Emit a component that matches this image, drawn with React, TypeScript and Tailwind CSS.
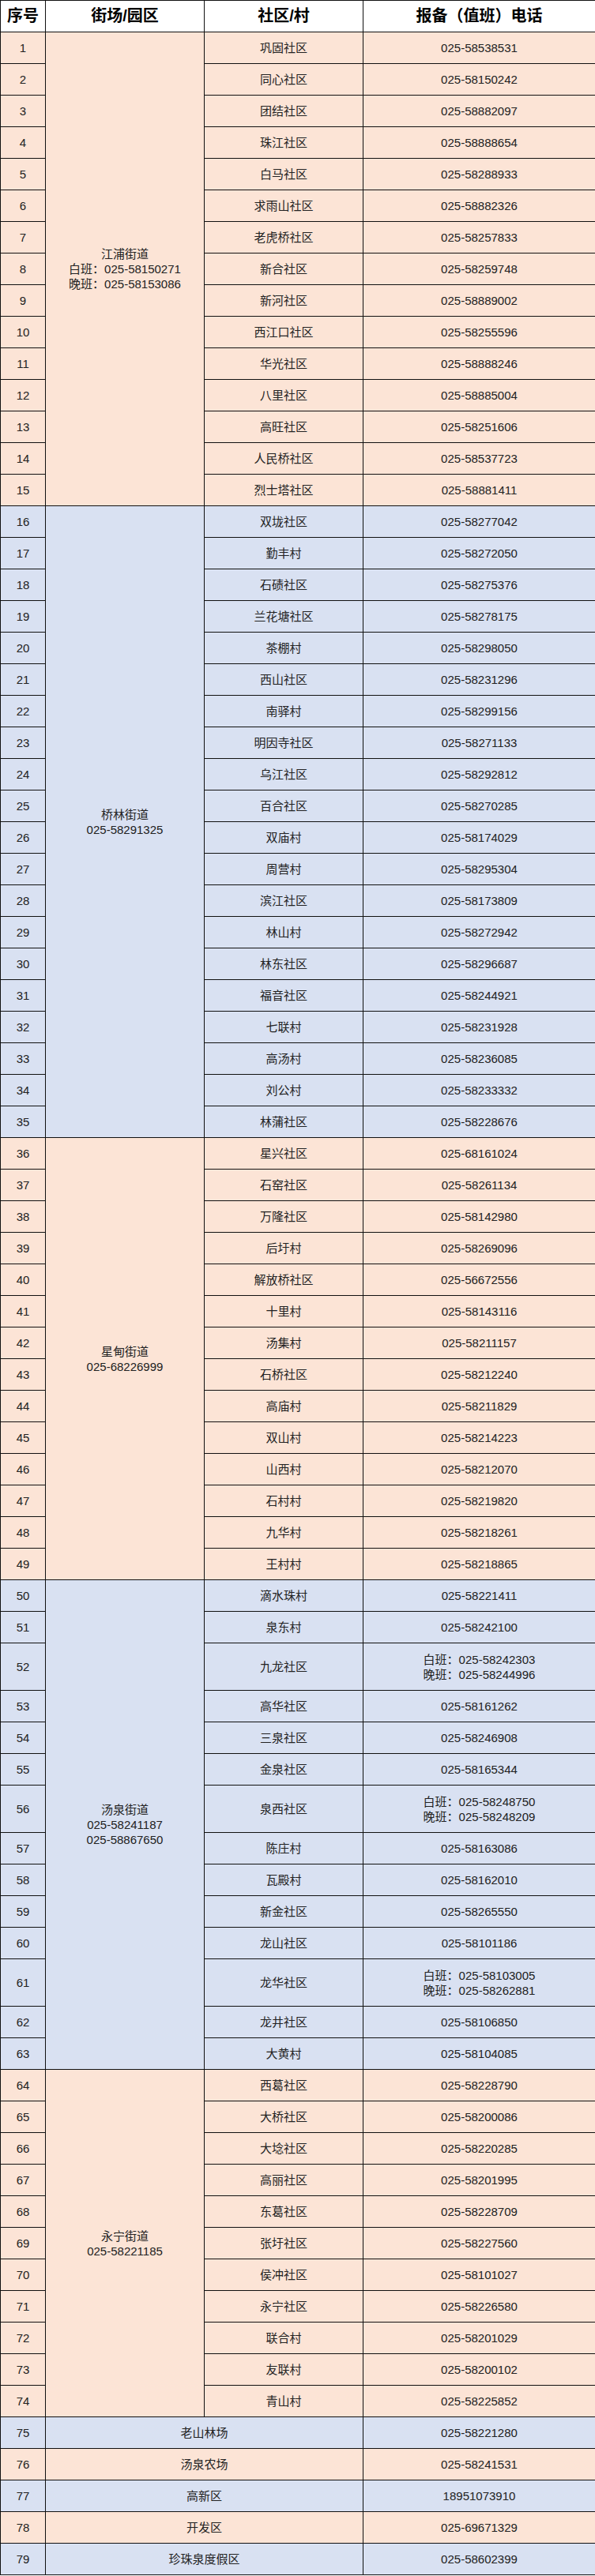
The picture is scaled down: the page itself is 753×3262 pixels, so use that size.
import React from 'react';

interface Row {
  name: string;
  phones: string[];
}

interface Group {
  title: string[];
  bg: string;
  rows: Row[];
}

const r = (name: string, ...phones: string[]): Row => ({ name, phones });

const PEACH = 'bg-[#fce4d6]';
const BLUE = 'bg-[#d9e1f2]';

const groups: Group[] = [
  {
    title: ['江浦街道', '白班：025-58150271', '晚班：025-58153086'],
    bg: PEACH,
    rows: [
      r('巩固社区', '025-58538531'),
      r('同心社区', '025-58150242'),
      r('团结社区', '025-58882097'),
      r('珠江社区', '025-58888654'),
      r('白马社区', '025-58288933'),
      r('求雨山社区', '025-58882326'),
      r('老虎桥社区', '025-58257833'),
      r('新合社区', '025-58259748'),
      r('新河社区', '025-58889002'),
      r('西江口社区', '025-58255596'),
      r('华光社区', '025-58888246'),
      r('八里社区', '025-58885004'),
      r('高旺社区', '025-58251606'),
      r('人民桥社区', '025-58537723'),
      r('烈士塔社区', '025-58881411'),
    ],
  },
  {
    title: ['桥林街道', '025-58291325'],
    bg: BLUE,
    rows: [
      r('双垅社区', '025-58277042'),
      r('勤丰村', '025-58272050'),
      r('石碛社区', '025-58275376'),
      r('兰花塘社区', '025-58278175'),
      r('茶棚村', '025-58298050'),
      r('西山社区', '025-58231296'),
      r('南驿村', '025-58299156'),
      r('明因寺社区', '025-58271133'),
      r('乌江社区', '025-58292812'),
      r('百合社区', '025-58270285'),
      r('双庙村', '025-58174029'),
      r('周营村', '025-58295304'),
      r('滨江社区', '025-58173809'),
      r('林山村', '025-58272942'),
      r('林东社区', '025-58296687'),
      r('福音社区', '025-58244921'),
      r('七联村', '025-58231928'),
      r('高汤村', '025-58236085'),
      r('刘公村', '025-58233332'),
      r('林蒲社区', '025-58228676'),
    ],
  },
  {
    title: ['星甸街道', '025-68226999'],
    bg: PEACH,
    rows: [
      r('星兴社区', '025-68161024'),
      r('石窑社区', '025-58261134'),
      r('万隆社区', '025-58142980'),
      r('后圩村', '025-58269096'),
      r('解放桥社区', '025-56672556'),
      r('十里村', '025-58143116'),
      r('汤集村', '025-58211157'),
      r('石桥社区', '025-58212240'),
      r('高庙村', '025-58211829'),
      r('双山村', '025-58214223'),
      r('山西村', '025-58212070'),
      r('石村村', '025-58219820'),
      r('九华村', '025-58218261'),
      r('王村村', '025-58218865'),
    ],
  },
  {
    title: ['汤泉街道', '025-58241187', '025-58867650'],
    bg: BLUE,
    rows: [
      r('滴水珠村', '025-58221411'),
      r('泉东村', '025-58242100'),
      r('九龙社区', '白班：025-58242303', '晚班：025-58244996'),
      r('高华社区', '025-58161262'),
      r('三泉社区', '025-58246908'),
      r('金泉社区', '025-58165344'),
      r('泉西社区', '白班：025-58248750', '晚班：025-58248209'),
      r('陈庄村', '025-58163086'),
      r('瓦殿村', '025-58162010'),
      r('新金社区', '025-58265550'),
      r('龙山社区', '025-58101186'),
      r('龙华社区', '白班：025-58103005', '晚班：025-58262881'),
      r('龙井社区', '025-58106850'),
      r('大黄村', '025-58104085'),
    ],
  },
  {
    title: ['永宁街道', '025-58221185'],
    bg: PEACH,
    rows: [
      r('西葛社区', '025-58228790'),
      r('大桥社区', '025-58200086'),
      r('大埝社区', '025-58220285'),
      r('高丽社区', '025-58201995'),
      r('东葛社区', '025-58228709'),
      r('张圩社区', '025-58227560'),
      r('侯冲社区', '025-58101027'),
      r('永宁社区', '025-58226580'),
      r('联合村', '025-58201029'),
      r('友联村', '025-58200102'),
      r('青山村', '025-58225852'),
    ],
  },
];

const others: { name: string; phone: string; bg: string }[] = [
  { name: '老山林场', phone: '025-58221280', bg: BLUE },
  { name: '汤泉农场', phone: '025-58241531', bg: PEACH },
  { name: '高新区', phone: '18951073910', bg: BLUE },
  { name: '开发区', phone: '025-69671329', bg: PEACH },
  { name: '珍珠泉度假区', phone: '025-58602399', bg: BLUE },
];

const cell = 'border border-[#111] text-center align-middle p-0';

export default function App() {
  let seq = 0;

  return (
    <div className="w-[753px] bg-white font-['Liberation_Sans','Noto_Sans_CJK_SC',sans-serif] text-[15px] leading-[19px] text-[#222]">
      <table className="w-[753px] table-fixed border-collapse">
        <colgroup>
          <col className="w-[57px]" />
          <col className="w-[201px]" />
          <col className="w-[201px]" />
          <col className="w-[294px]" />
        </colgroup>
        <thead>
          <tr className="h-10 bg-white text-[20px] font-bold text-black">
            <th className={cell}>序号</th>
            <th className={cell}>街场/园区</th>
            <th className={cell}>社区/村</th>
            <th className={cell}>报备（值班）电话</th>
          </tr>
        </thead>
        <tbody>
          {groups.map((group) =>
            group.rows.map((row, i) => {
              seq += 1;
              return (
                <tr
                  key={seq}
                  className={`${group.bg} ${row.phones.length > 1 ? 'h-[60px]' : 'h-10'}`}
                >
                  <td className={cell}>{seq}</td>
                  {i === 0 && (
                    <td className={cell} rowSpan={group.rows.length}>
                      {group.title.map((line) => (
                        <div key={line}>{line}</div>
                      ))}
                    </td>
                  )}
                  <td className={cell}>{row.name}</td>
                  <td className={cell}>
                    {row.phones.map((p) => (
                      <div key={p}>{p}</div>
                    ))}
                  </td>
                </tr>
              );
            })
          )}
          {others.map((o, i) => (
            <tr key={o.name} className={`${o.bg} h-10`}>
              <td className={cell}>{75 + i}</td>
              <td className={cell} colSpan={2}>
                {o.name}
              </td>
              <td className={cell}>{o.phone}</td>
            </tr>
          ))}
        </tbody>
      </table>
    </div>
  );
}
